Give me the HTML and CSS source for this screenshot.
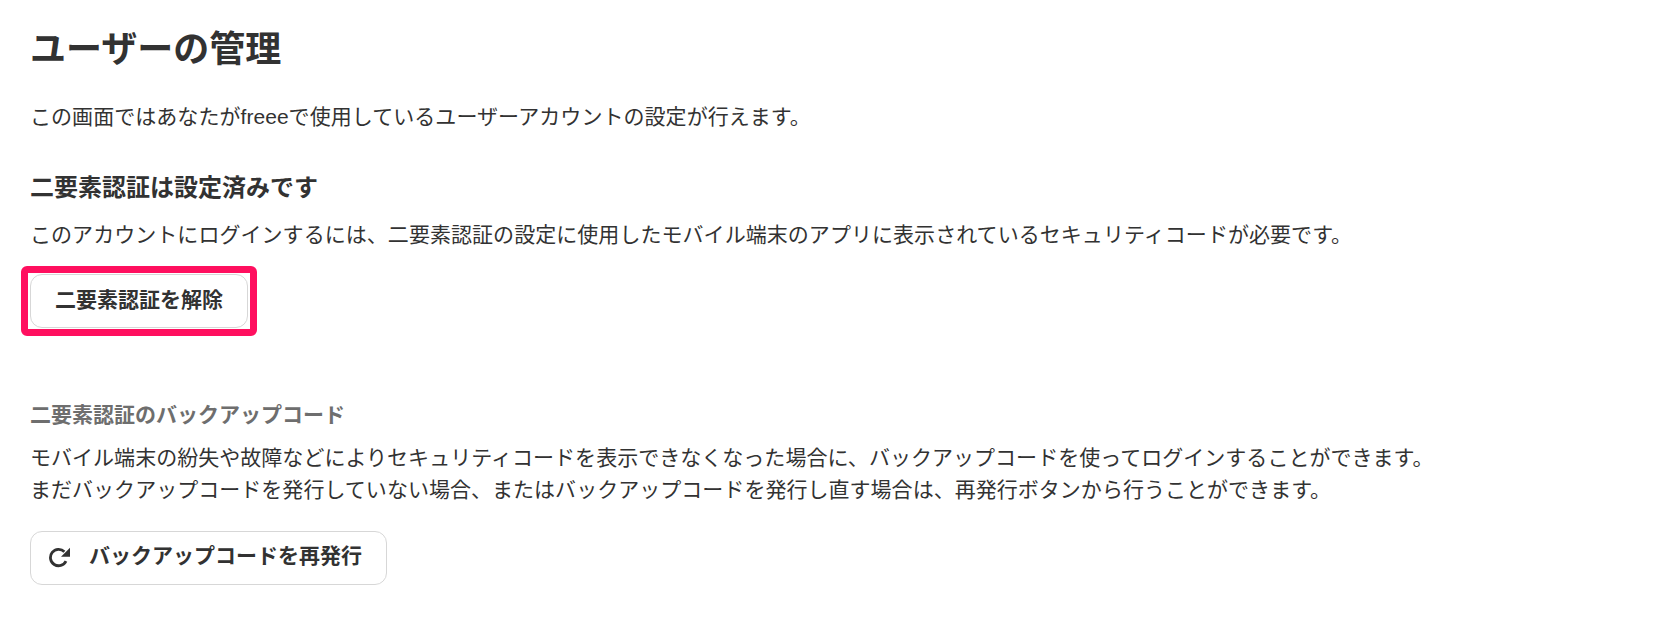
FILE: index.html
```html
<!DOCTYPE html>
<html lang="ja">
<head>
    <meta charset="UTF-8">
    <title>ユーザーの管理</title>
    <link rel="stylesheet" href="styles.css">
</head>
<body class="mainBody">
    <h1 class="pageTitle">ユーザーの管理</h1>
    <p class="intro">この画面ではあなたがfreeeで使用しているユーザーアカウントの設定が行えます。</p>

    <h2 class="sectionTitle">二要素認証は設定済みです</h2>
    <p class="sectionText">このアカウントにログインするには、二要素認証の設定に使用したモバイル端末のアプリに表示されているセキュリティコードが必要です。</p>
    <button type="button" class="actionBtn highlighted"><span class="btnLabel">二要素認証を解除</span></button>

    <h3 class="subTitle">二要素認証のバックアップコード</h3>
    <p class="backupText">モバイル端末の紛失や故障などによりセキュリティコードを表示できなくなった場合に、バックアップコードを使ってログインすることができます。<br>まだバックアップコードを発行していない場合、またはバックアップコードを発行し直す場合は、再発行ボタンから行うことができます。</p>
    <button type="button" class="actionBtn reissueBtn">
        <svg class="reloadIcon" viewBox="0 0 22 22" width="22" height="22" aria-hidden="true">
            <path d="M17 14.2A8.2 8.2 0 1 1 15.4 4.7" fill="none" stroke="#323232" stroke-width="2.8"/>
            <path d="M21 .7V9.7H12Z" fill="#323232"/>
        </svg>
        <span class="btnLabel">バックアップコードを再発行</span>
    </button>
</body>
</html>
```

FILE: styles.css
```css
.mainBody {
    margin: 0;
    padding: 0 30px;
    color: #323232;
    background-color: #fff;
    font-family: "Liberation Sans", "Noto Sans CJK JP", sans-serif;
    font-size: 21px;
}
.pageTitle {
    margin: 0;
    padding-top: 22px;
    font-size: 36px;
    line-height: 56px;
    font-weight: 700;
}
.intro {
    margin: 23px 0 0;
    line-height: 32px;
    letter-spacing: 0.05px;
}
.sectionTitle {
    margin: 37px 0 0;
    font-size: 24px;
    line-height: 36px;
    font-weight: 700;
}
.sectionText {
    margin: 13px 0 0;
    line-height: 32px;
    letter-spacing: 0.05px;
}
.subTitle {
    margin: 71px 0 0;
    color: #6e6e6e;
    font-size: 21px;
    line-height: 32px;
    font-weight: 700;
}
.backupText {
    margin: 11px 0 0;
    line-height: 32px;
    letter-spacing: 0.03px;
}
.actionBtn {
    display: flex;
    align-items: center;
    height: 54px;
    margin-top: 23px;
    padding: 0 24px;
    color: #323232;
    background-color: #fff;
    border: 1px solid #d7d7d7;
    border-radius: 12px;
    font-family: inherit;
    font-size: 21px;
    font-weight: 700;
    position: relative;
}
.btnLabel {
    padding-bottom: 6px;
}
.highlighted::after {
    content: "";
    position: absolute;
    top: -9px;
    right: -10px;
    bottom: -9px;
    left: -10px;
    border: 7px solid #ff0f5f;
    border-radius: 6px;
}
.reissueBtn {
    margin-top: 25px;
    padding: 0 24px 0 18px;
    gap: 18px;
}
.reissueBtn .btnLabel {
    padding-bottom: 8px;
}
.reloadIcon {
    flex: none;
}
```
